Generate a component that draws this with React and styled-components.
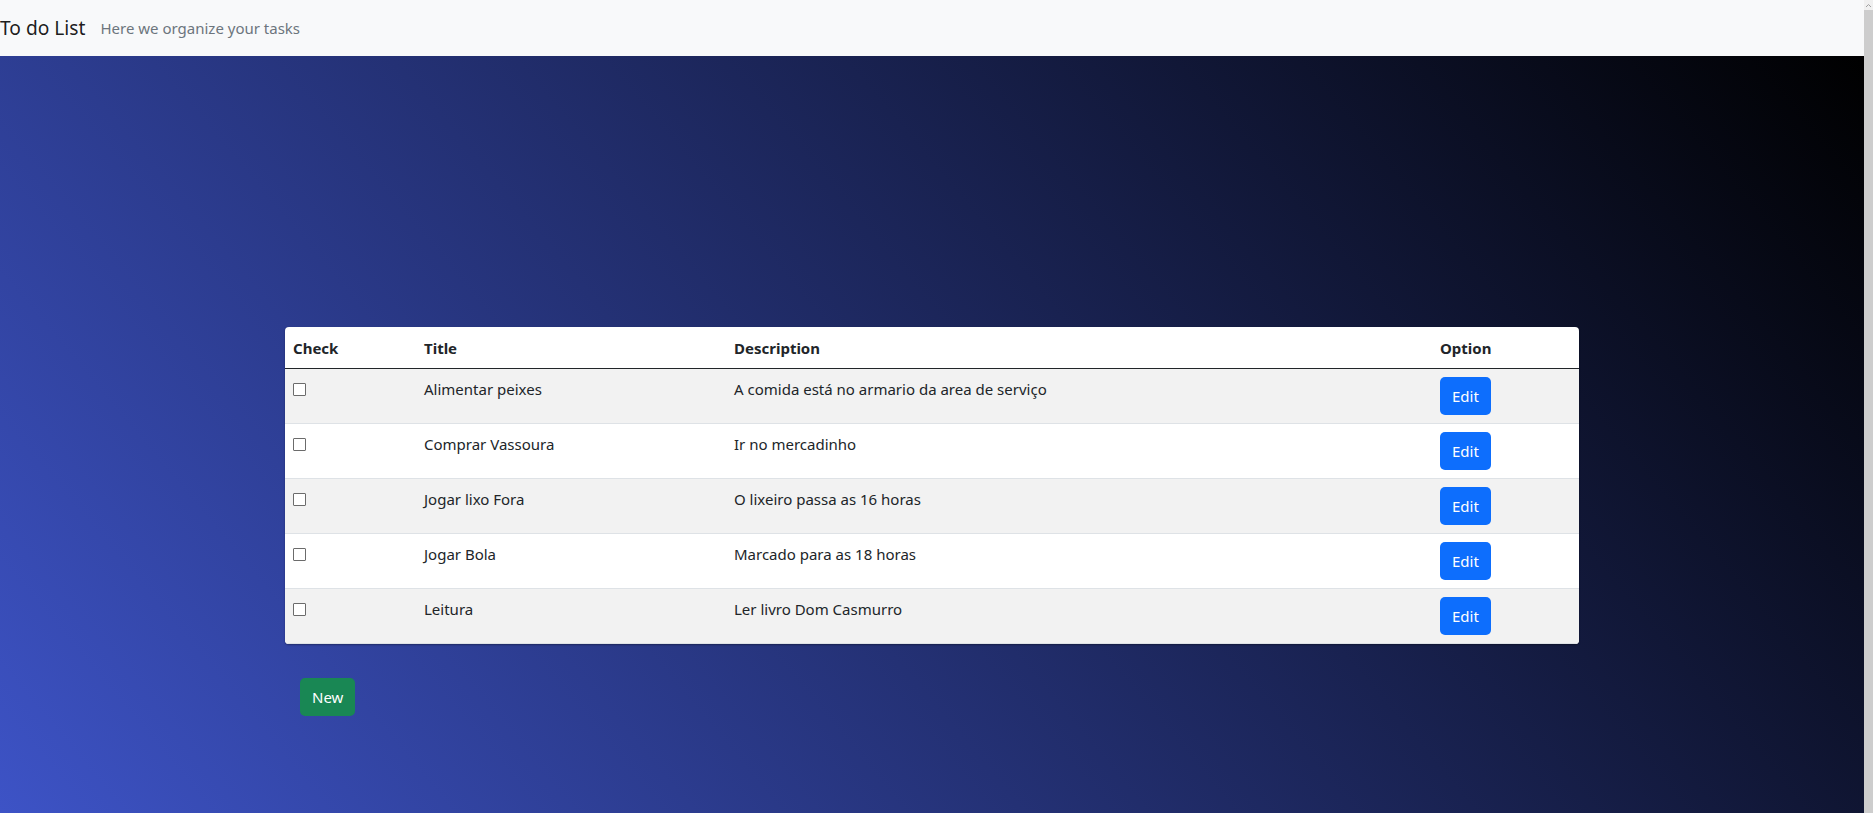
import React from "react";
import styled, { createGlobalStyle } from "styled-components";

const GlobalStyle = createGlobalStyle`
  html, body {
    margin: 0;
    padding: 0;
    height: 100%;
    overflow: hidden;
  }
  body {
    font-family: "Noto Sans", "Open Sans", sans-serif;
    font-size: 15px;
    color: #212529;
  }
  * { box-sizing: border-box; }
`;

const Shell = styled.div`
  display: flex;
  height: 100vh;
`;

const Page = styled.div`
  flex: 1;
  display: flex;
  flex-direction: column;
  min-width: 0;
`;

const Navbar = styled.nav`
  height: 56px;
  flex: 0 0 56px;
  background: #f8f9fa;
  display: flex;
  align-items: center;
`;

const Brand = styled.span`
  font-size: 19.2px;
  line-height: 30px;
  color: rgba(0, 0, 0, 0.9);
  margin-right: 15px;
`;

const Tagline = styled.span`
  font-size: 15px;
  color: #6c757d;
`;

const Main = styled.main`
  flex: 1;
  background: linear-gradient(50deg, #3d53c6 0%, #000 100%);
  display: flex;
  flex-direction: column;
  align-items: center;
  padding-top: 271px;
`;

const Card = styled.div`
  width: 1294px;
  background: #fff;
  border-radius: 4px;
  overflow: hidden;
  box-shadow: 0 1px 2px rgba(0, 0, 0, 0.35);
`;

const Table = styled.table`
  width: 100%;
  border-collapse: collapse;
  table-layout: fixed;
  font-size: 15px;
`;

const HeadCell = styled.th`
  text-align: left;
  font-weight: 700;
  padding: 9px 8px 8px;
  line-height: 24px;
  width: ${(p) => p.$w}px;
  border-bottom: 1px solid #212529;
  color: #212529;
`;

const Row = styled.tr`
  background: ${(p) => (p.$striped ? "#f2f2f2" : "#fff")};
  border-bottom: 1px solid #dee2e6;
`;

const Cell = styled.td`
  padding: 8px;
  line-height: 24px;
  vertical-align: top;
  color: #212529;
`;

const Check = styled.input.attrs({ type: "checkbox" })`
  appearance: none;
  display: block;
  width: 13px;
  height: 13px;
  margin: 6px 0 0 0;
  border: 1px solid #6b6b6b;
  border-radius: 1px;
  background: #fff;
`;

const Button = styled.button`
  font-family: inherit;
  font-size: 15px;
  line-height: 24px;
  height: 38px;
  padding: 6px 12px;
  border: none;
  border-radius: 5px;
  color: #fff;
  background: ${(p) => p.$bg};
  cursor: pointer;
`;

const Actions = styled.div`
  width: 1294px;
  padding-left: 15px;
  margin-top: 34px;
`;

const Scrollbar = styled.div`
  width: 9px;
  flex: 0 0 9px;
  background: #cdcdcd;
  display: flex;
  flex-direction: column;
`;

const ScrollCap = styled.div`
  height: 10px;
  background: #f0f0f0;
  display: flex;
  align-items: center;
  justify-content: center;
`;

const tasks = [
  { title: "Alimentar peixes", desc: "A comida está no armario da area de serviço" },
  { title: "Comprar Vassoura", desc: "Ir no mercadinho" },
  { title: "Jogar lixo Fora", desc: "O lixeiro passa as 16 horas" },
  { title: "Jogar Bola", desc: "Marcado para as 18 horas" },
  { title: "Leitura", desc: "Ler livro Dom Casmurro" },
];

export default function App() {
  return (
    <>
      <GlobalStyle />
      <Shell>
        <Page>
          <Navbar>
            <Brand>To do List</Brand>
            <Tagline>Here we organize your tasks</Tagline>
          </Navbar>
          <Main>
            <Card>
              <Table>
                <thead>
                  <tr>
                    <HeadCell $w={131}>Check</HeadCell>
                    <HeadCell $w={310}>Title</HeadCell>
                    <HeadCell $w={706}>Description</HeadCell>
                    <HeadCell $w={147}>Option</HeadCell>
                  </tr>
                </thead>
                <tbody>
                  {tasks.map((t, i) => (
                    <Row key={t.title} $striped={i % 2 === 0}>
                      <Cell>
                        <Check />
                      </Cell>
                      <Cell>{t.title}</Cell>
                      <Cell>{t.desc}</Cell>
                      <Cell>
                        <Button $bg="#0d6efd">Edit</Button>
                      </Cell>
                    </Row>
                  ))}
                </tbody>
              </Table>
            </Card>
            <Actions>
              <Button $bg="#198754">New</Button>
            </Actions>
          </Main>
        </Page>
        <Scrollbar>
          <ScrollCap>
            <svg width="7" height="5" viewBox="0 0 7 5">
              <path d="M1 4 L3.5 1.5 L6 4" stroke="#a0a0a0" strokeWidth="1" fill="none" />
            </svg>
          </ScrollCap>
        </Scrollbar>
      </Shell>
    </>
  );
}
